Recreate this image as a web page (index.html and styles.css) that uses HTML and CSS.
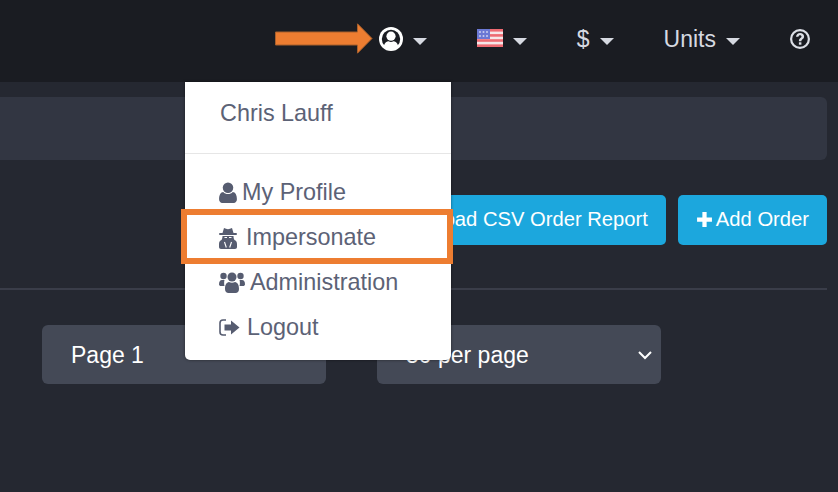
FILE: index.html
```html
<!DOCTYPE html>
<html>
<head>
	<meta charset="utf-8">
	<title>Orders</title>
	<link rel="stylesheet" href="styles.css">
</head>
<body>

<nav class="navbar">
	<a class="nav-item">
		<svg class="nav-user" viewBox="0 0 24 24"><circle cx="12" cy="12" r="12" fill="#fff"/><circle cx="12" cy="12" r="9.2" fill="#1a1c22"/><circle cx="12" cy="9.2" r="4.600" fill="#fff"/><path d="M4.800 19c.8-3.400 3.200-4.800 4.800-4.800.8.500 1.500.7 2.400.7s1.600-.2 2.400-.7c1.600 0 4 1.400 4.800 4.800-1.800 2-4.400 3.200-7.200 3.200s-5.400-1.200-7.200-3.200z" fill="#fff"/></svg>
		<span class="caret"></span>
	</a>
	<a class="nav-item">
		<svg class="nav-flag" viewBox="0 0 26 18"><rect width="26" height="18" fill="#f6e6e8"/><g fill="#ee6a72"><rect width="26" height="2.600"/><rect y="5.100" width="26" height="2.600"/><rect y="10.200" width="26" height="2.600"/><rect y="15.400" width="26" height="2.600"/></g><rect width="13" height="10" fill="#6b78d4"/><g fill="#c9cff0"><circle cx="3" cy="3" r="1"/><circle cx="6.500" cy="3" r="1"/><circle cx="10" cy="3" r="1"/><circle cx="3" cy="7" r="1"/><circle cx="6.500" cy="7" r="1"/><circle cx="10" cy="7" r="1"/></g></svg>
		<span class="caret"></span>
	</a>
	<a class="nav-item"><span class="nav-text">$</span><span class="caret"></span></a>
	<a class="nav-item"><span class="nav-text">Units</span><span class="caret"></span></a>
	<a class="nav-item">
		<svg class="nav-help" viewBox="0 0 20 20"><circle cx="10" cy="10" r="8.900" fill="none" stroke="#dcdfe6" stroke-width="2.200"/><path d="M6 7.800C6.200 5.400 7.900 4 10.100 4c2.300 0 4 1.500 4 3.500 0 2.700-2.700 2.700-2.700 4.700H8.900c0-3.200 2.600-3.100 2.600-4.600 0-.8-.6-1.400-1.500-1.400-.9 0-1.500.6-1.600 1.600z" fill="#dcdfe6"/><rect x="8.900" y="13.300" width="2.500" height="2.400" fill="#dcdfe6"/></svg>
	</a>
</nav>

<div class="content">
	<div class="crumb-bar"></div>
	<div class="actions">
		<a class="btn">Download CSV Order Report</a>
		<a class="btn">
			<svg class="btn-plus" viewBox="0 0 16 16"><path d="M6 1h4v5h5v4h-5v5H6v-5H1V6h5z" fill="#fff"/></svg>
			Add Order
		</a>
	</div>
	<hr class="rule">
	<div class="filters">
		<div class="select-box"><span>Page 1</span></div>
		<div class="select-box">
			<span>50 per page</span>
			<svg class="chevron" viewBox="0 0 16 10"><path d="M2 2l6 6 6-6" fill="none" stroke="#fff" stroke-width="2"/></svg>
		</div>
	</div>
</div>

<!-- arrow + box were drawn on the screenshot -->
<svg class="mark-arrow" viewBox="0 0 98 31"><path d="M.5 9h82V.8L97 15.500 82.500 30.200V22H.5z" fill="#ed7d31" stroke="#a9602c" stroke-width="1"/></svg>

<div class="menu">
	<div class="menu-name">Chris Lauff</div>
	<div class="menu-divider"></div>
	<a class="menu-item">
		<svg class="menu-icon ic-profile" viewBox="0 0 17 20"><circle cx="8.500" cy="5.500" r="5"/><path d="M0 16.500c0-4.200 1.500-6.800 4-7 1 1.300 2.700 2 4.500 2s3.500-.7 4.500-2c2.500.2 4 2.800 4 7 0 2-1.300 3.500-3 3.500H3c-1.700 0-3-1.500-3-3.500z"/></svg>
		My Profile
	</a>
	<a class="menu-item">
		<svg class="menu-icon ic-spy" viewBox="0 0 18 22"><path d="M5 1l2 .8c1.300.5 2.700.5 4 0L13 1l1.500 5H3.500z"/><rect x="0" y="6" width="18" height="2" rx="1"/><path d="M3.500 9h11c0 1.500.2 2.800 1 4 1.300.4 2.500 1.800 2.500 4v3c0 1.200-.8 2-2 2H2c-1.200 0-2-.8-2-2v-3c0-2.200 1.200-3.600 2.500-4 .8-1.200 1-2.500 1-4z"/><path d="M5.500 15l1.800 5.500M12.500 15l-1.800 5.500" fill="none" stroke="#fff" stroke-width="1.100"/><path d="M5.500 10.500h2.500M10 10.500h2.500" fill="none" stroke="#fff" stroke-width="1"/></svg>
		Impersonate
	</a>
	<a class="menu-item">
		<svg class="menu-icon ic-group" viewBox="0 0 26 21"><circle cx="4.500" cy="4" r="3.200"/><circle cx="21.500" cy="4" r="3.200"/><circle cx="13" cy="5" r="4.500"/><path d="M0 12.500c0-3 1-4.500 3-4.500h2.500c-.5 1.500-.5 4.500 0 6H2c-1.200 0-2-.6-2-1.500zM26 12.500c0-3-1-4.500-3-4.500h-2.500c.5 1.500.5 4.500 0 6H24c1.200 0 2-.6 2-1.500z"/><path d="M6 17c0-4.500 1.500-6.500 4-7 1.700 1 4.300 1 6 0 2.500.5 4 2.500 4 7 0 2.500-1.500 4-3.500 4h-7C7.500 21 6 19.500 6 17z"/></svg>
		Administration
	</a>
	<a class="menu-item">
		<svg class="menu-icon ic-logout" viewBox="0 0 21 18"><path d="M7 1.500H4C2.500 1.500 1 2.700 1 4.500v9c0 1.800 1.500 3 3 3h3" fill="none" stroke="#565c70" stroke-width="1.600"/><path d="M12 2l8.500 7-8.500 7V12H5.500V6H12z"/></svg>
		Logout
	</a>
</div>
<div class="mark-box"></div>

</body>
</html>
```

FILE: styles.css
```css
html, body {
	margin:0px;
	padding:0px;
}
body {
	position:relative;
	width:838px;
	height:492px;
	overflow:hidden;

	background-color:#252831;
	color:#fff;
	font-family:"Liberation Sans", Arial, sans-serif;
	font-size:23px;
}
a {
	text-decoration:none;
}

.navbar {
	display:flex;
	justify-content:flex-end;
	align-items:center;
	gap:50px;

	box-sizing:border-box;
	height:82px;
	padding:0px 28px 5px 0px;

	background-color:#1a1c22;
	color:#d6d9e1;
}
.nav-item {
	display:flex;
	align-items:center;
	gap:10px;
}
.nav-text {
	margin-top:2px;
}
.caret {
	margin-top:6px;
	border-top:7px solid #d6d9e1;
	border-left:7px solid transparent;
	border-right:7px solid transparent;
}
.nav-user {
	width:24px;
	height:24px;
}
.nav-flag {
	width:26px;
	height:18px;
	margin-bottom:2px;
}
.nav-help {
	width:20px;
	height:20px;
}

.content {
	padding:15px 11px 0px 0px;
}
.crumb-bar {
	height:63px;
	background-color:#323642;
	border-radius:0px 6px 6px 0px;
}
.actions {
	display:flex;
	justify-content:flex-end;
	gap:12px;
	margin-top:35px;
}
.btn {
	display:flex;
	align-items:center;
	gap:3px;

	box-sizing:border-box;
	height:50px;
	padding:0px 18px 2px 18px;

	background-color:#1ca7dd;
	border-radius:5px;
	color:#fff;
	font-size:20.2px;
}
.btn-plus {
	width:17px;
	height:17px;
}
.rule {
	height:2px;
	margin:43px 0px 0px 0px;
	border:0px;
	background-color:#3a3d49;
}
.filters {
	display:flex;
	gap:51px;
	margin-top:35px;
	padding-left:42px;
}
.select-box {
	display:flex;
	justify-content:space-between;
	align-items:center;

	box-sizing:border-box;
	width:284px;
	height:59px;
	padding:2px 8px 0px 29px;

	background-color:#444956;
	border-radius:6px;
}
.chevron {
	width:16px;
	height:10px;
	margin-bottom:2px;
}

.menu {
	position:absolute;
	left:185px;
	top:82px;

	box-sizing:border-box;
	width:266px;
	height:278px;

	background-color:#fff;
	border-radius:0px 0px 5px 5px;
	box-shadow:0px 0px 3px rgba(0, 0, 0, .5);
	color:#5c6276;
	font-size:23.4px;
}
.menu-name {
	padding:17px 0px 0px 35px;
	line-height:28px;
}
.menu-divider {
	height:1px;
	margin-top:26px;
	background-color:#e6e6e6;
}
.menu-item {
	display:flex;
	align-items:center;
	gap:5px;

	height:45px;
	padding-left:34px;
}
.menu-item:first-of-type {
	margin-top:16px;
}
.menu-icon {
	flex:none;
	fill:#565c70;
}
.ic-profile {
	width:18px;
	height:21px;
}
.ic-spy {
	width:18px;
	height:22px;
	margin-right:4px;
}
.ic-group {
	width:26px;
	height:21px;
}
.ic-logout {
	width:21px;
	height:19px;
	margin-right:2px;
}

.mark-arrow {
	position:absolute;
	left:275px;
	top:23px;
	width:98px;
	height:31px;
}
.mark-box {
	position:absolute;
	left:181px;
	top:209px;

	box-sizing:border-box;
	width:272px;
	height:55px;

	border:6px solid #ed7d31;
}
```
